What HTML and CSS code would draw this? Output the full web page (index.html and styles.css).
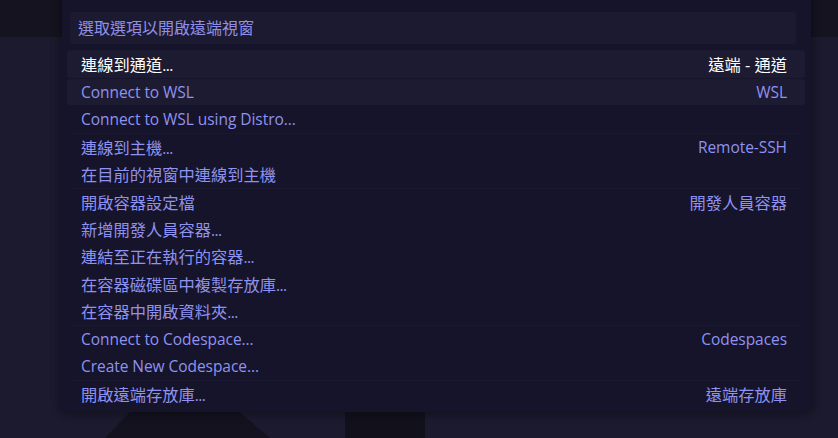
FILE: index.html
```html
<!DOCTYPE html>
<html lang="zh-Hant">
<head>
<meta charset="utf-8">
<title>Remote</title>
<link rel="stylesheet" href="styles.css">
</head>
<body>
<div class="workbench">
  <div class="titlebar"></div>
  <div class="editor">
    <svg class="letterpress" width="838" height="401" viewBox="0 37 838 401">
      <polygon points="132,410 237,410 270,438 105,438" fill="#13121e"/>
      <rect x="345" y="405" width="80" height="40" fill="#12111b"/>
    </svg>
  </div>
</div>
<div class="quick-input">
  <div class="input">選取選項以開啟遠端視窗</div>
  <div class="list">
    <div class="row focused"><span class="label">連線到通道<span class="dots">...</span></span><span class="desc">遠端 - 通道</span></div>
    <div class="row hovered sep"><span class="label en">Connect to WSL</span><span class="desc en">WSL</span></div>
    <div class="row"><span class="label en">Connect to WSL using Distro...</span></div>
    <div class="row sep"><span class="label">連線到主機<span class="dots">...</span></span><span class="desc en">Remote-SSH</span></div>
    <div class="row"><span class="label">在目前的視窗中連線到主機</span></div>
    <div class="row sep"><span class="label">開啟容器設定檔</span><span class="desc">開發人員容器</span></div>
    <div class="row"><span class="label">新增開發人員容器<span class="dots">...</span></span></div>
    <div class="row"><span class="label">連結至正在執行的容器<span class="dots">...</span></span></div>
    <div class="row"><span class="label">在容器磁碟區中複製存放庫<span class="dots">...</span></span></div>
    <div class="row"><span class="label">在容器中開啟資料夾<span class="dots">...</span></span></div>
    <div class="row sep"><span class="label en">Connect to Codespace...</span><span class="desc en">Codespaces</span></div>
    <div class="row"><span class="label en">Create New Codespace...</span></div>
    <div class="row sep"><span class="label">開啟遠端存放庫<span class="dots">...</span></span><span class="desc">遠端存放庫</span></div>
  </div>
</div>
</body>
</html>
```

FILE: styles.css
```css
* { box-sizing: border-box; }
html, body {
  margin: 0;
  padding: 0;
  width: 838px;
  height: 438px;
  overflow: hidden;
  background: #1b1a2e;
  font-family: "Open Sans", "Noto Sans CJK TC", sans-serif;
}
.workbench {
  display: flex;
  flex-direction: column;
  height: 438px;
}
.titlebar {
  height: 37px;
  background: #14131f;
  flex: none;
}
.editor {
  flex: 1;
  position: relative;
  background: #1b1a2e;
}
.letterpress {
  position: absolute;
  left: 0;
  top: 0;
}
.quick-input {
  position: absolute;
  left: 62px;
  top: 0;
  width: 749px;
  height: 412px;
  background: #15142a;
  border-radius: 0 0 6px 6px;
  box-shadow: 0 0 8px 2px rgba(0, 0, 0, 0.35);
  padding: 12px 6px 0 5px;
}
.input {
  margin: 0 9px 0 3px;
  height: 32px;
  background: #1c1a31;
  border-radius: 3px;
  padding-left: 8px;
  font-size: 16px;
  line-height: 32px;
  color: #8f8fe6;
}
.list {
  margin-top: 6px;
}
.row {
  height: 27.5px;
  display: flex;
  align-items: center;
  justify-content: space-between;
  padding: 0 18px 0 14px;
  font-size: 16.25px;
  color: #9092f0;
  white-space: nowrap;
  border-radius: 4px;
}
.en {
  font-size: 15.5px;
  letter-spacing: -0.05px;
}
.dots {
  font-size: 15.5px;
  letter-spacing: -0.6px;
}
.row.sep {
  border-top: 1px solid #1a1930;
}
.row.focused {
  background: #1d1b32;
  color: #ffffff;
}
.row.hovered {
  background: #1d1b32;
  border-top: 1.5px solid #15142a;
}
```
